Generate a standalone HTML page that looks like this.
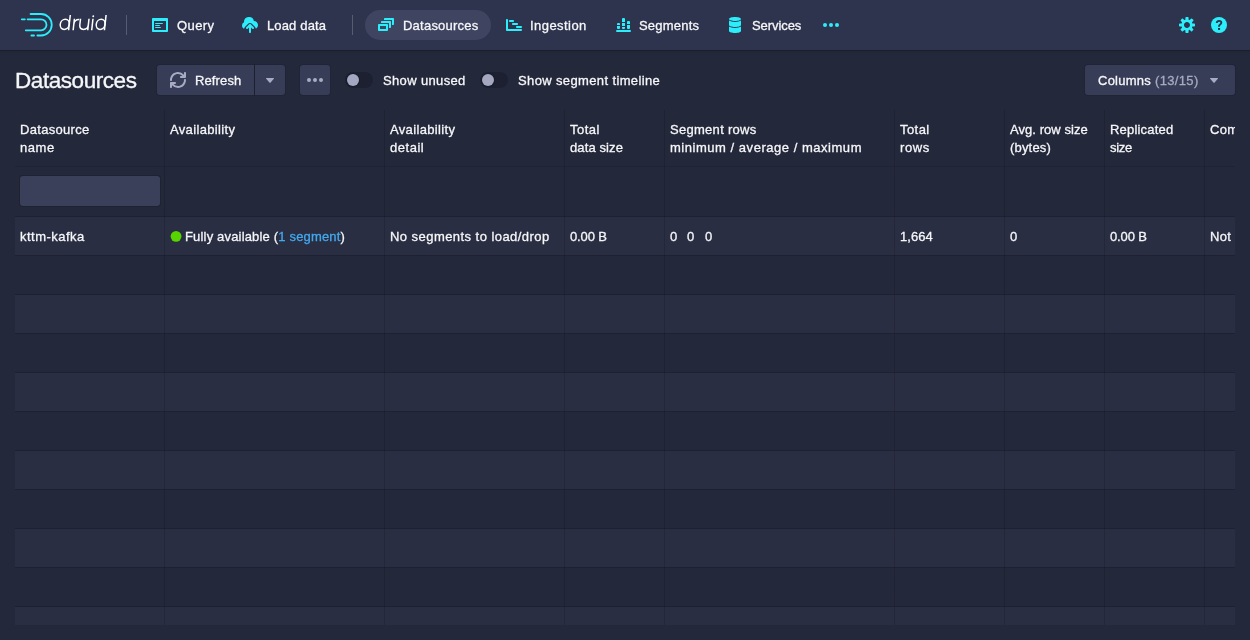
<!DOCTYPE html>
<html>
<head>
<meta charset="utf-8">
<title>Apache Druid</title>
<style>
*{box-sizing:border-box;margin:0;padding:0}
html,body{width:1250px;height:640px;overflow:hidden;background:#24283b}
body{font-family:"Liberation Sans",sans-serif;font-size:14px;line-height:18px;color:#f6f7f9;position:relative}
.t{position:absolute;white-space:nowrap;font-size:13px;line-height:18px;height:18px;transform-origin:0 50%;-webkit-text-stroke:0.3px currentColor;will-change:transform}
#nav{position:absolute;left:0;top:0;width:1250px;height:50px;background:#2f344e;box-shadow:0 1px 0 rgba(17,20,24,.27),0 2px 0 rgba(17,20,24,.1),0 3px 0 rgba(17,20,24,.04)}
.div{position:absolute;top:15px;width:1px;height:20px;background:rgba(255,255,255,.2)}
.pill{position:absolute;left:365px;top:10px;width:126px;height:30px;border-radius:15px;background:#3f4461}
svg{position:absolute;overflow:visible}
.ic{fill:#2ceefb}
.btn{position:absolute;top:65px;height:30px;background:#383d57;border-radius:3px;box-shadow:0 0 0 1px rgba(17,20,24,.18)}
.sw{position:absolute;top:72px;width:28px;height:16px;border-radius:8px;background:#1d2030}
.sw i{position:absolute;left:2px;top:2px;width:12px;height:12px;border-radius:6px;background:#a3a7c0;box-shadow:0 0 0 1px rgba(17,20,24,.3)}
#tbl{position:absolute;left:15px;top:110px;width:1220px;height:515px;overflow:hidden}
.vl{position:absolute;top:0;width:1px;height:515px;background:rgba(0,0,0,.14)}
.hl{position:absolute;left:0;width:1220px;height:1px;background:rgba(0,0,0,.16)}
.row{position:absolute;left:0;width:1220px;height:38px}
.odd{background:#292e42}
#filt{position:absolute;left:5px;top:66px;width:140px;height:30px;border-radius:3px;background:#3a3f5a;box-shadow:0 0 0 1px rgba(17,20,24,.28)}
a{color:#43a8ee;text-decoration:none}
</style>
</head>
<body>

<!-- ================= NAVBAR ================= -->
<div id="nav">
  <svg id="logo" style="left:0;top:0" width="120" height="50" viewBox="0 0 120 50">
    <g fill="none" stroke="#2ceefb" stroke-width="1.8" stroke-linecap="round">
      <path d="M30.6 14H41a10.75 10.75 0 0 1 0 21.5H37.4"/>
      <path d="M31.4 35.5h2.6"/>
      <path d="M27.600 19.300H41a5.500 5.500 0 0 1 0 11H25.800"/>
      <path d="M21.800 19.300h3"/>
    </g>
    <!-- wordmark "druid" -->
    <g fill="none" stroke="#ffffff" stroke-width="1.5" stroke-linecap="butt" stroke-linejoin="round" transform="translate(0,30.2) skewX(-6.3) translate(0,-30.2)">
      <!-- d -->
      <path d="M68.6 14.9V30.2"/><ellipse cx="64.1" cy="24.35" rx="4.5" ry="5.05"/>
      <!-- r -->
      <path d="M73.15 18.7V30.2M73.15 24.4c0-3.200 1.700-5 4.900-4.800"/>
      <!-- u -->
      <path d="M79.25 18.7v6.4c0 2.700 1.700 4.300 4.250 4.300s4.250-1.600 4.250-4.300v-6.400M87.750 24v6.200"/>
      <!-- i -->
      <path d="M91.7 18.7V30.2"/><circle cx="91.7" cy="16.2" r="0.95" fill="#fff" stroke="none"/>
      <!-- d -->
      <path d="M104.4 14.9V30.2"/><ellipse cx="100" cy="24.35" rx="4.4" ry="5.05"/>
    </g>
  </svg>
  <div class="div" style="left:126px"></div>
  <div class="div" style="left:352px"></div>
  <div class="pill"></div>

  <!-- Query: application icon -->
  <svg class="ic" style="left:152px;top:17px" width="16" height="16" viewBox="0 0 16 16"><path fill-rule="evenodd" d="M3.500 7h7c.28 0 .5-.22.5-.5s-.22-.5-.5-.5h-7c-.28 0-.5.22-.5.500s.22.500.500.500zM15 1H1c-.55 0-1 .45-1 1v12c0 .55.45 1 1 1h14c.55 0 1-.45 1-1V2c0-.55-.45-1-1-1zm-1 12H2V4h12v9zM3.500 9h4c.28 0 .5-.22.5-.5S7.780 8 7.500 8h-4c-.28 0-.5.22-.5.500s.22.500.500.500zm0 2h5c.28 0 .5-.22.5-.5s-.22-.5-.5-.5h-5c-.28 0-.5.22-.5.500s.22.500.500.500z"/></svg>
  <!-- cloud-upload icon -->
  <svg class="ic" style="left:242px;top:17px" width="16" height="16" viewBox="0 0 16 16"><path fill-rule="evenodd" d="M8.710 7.290C8.530 7.110 8.280 7 8 7s-.53.110-.71.290l-3 3a1.003 1.003 0 001.420 1.420L7 10.410V15c0 .55.450 1 1 1s1-.45 1-1v-4.590l1.290 1.290c.18.190.43.300.71.300a1.003 1.003 0 00.71-1.710l-3-3zM12 4c-.03 0-.07 0-.1.010A5 5 0 002 5c0 .11.010.22.020.33A3.510 3.510 0 000 8.500c0 1.410.84 2.610 2.030 3.170.2-.71.580-1.360 1.140-1.920L5.880 7.040C6.460 6.350 7.210 6 8 6s1.540.35 2.120 1.040l2.710 2.710c.54.54.93 1.200 1.130 1.900A3.990 3.990 0 0016 8c0-2.210-1.790-4-4-4z"/></svg>
  <!-- Datasources: multi-select -->
  <svg class="ic" style="left:378px;top:17px" width="16" height="16" viewBox="0 0 16 16"><path fill-rule="evenodd" d="M12 3.980H4c-.55 0-1 .45-1 1v1h8v5h1c.55 0 1-.45 1-1v-5c0-.55-.45-1-1-1zm3-3H7c-.55 0-1 .45-1 1v1h8v5h1c.55 0 1-.45 1-1v-5c0-.55-.45-1-1-1zm-6 6H1c-.55 0-1 .45-1 1v5c0 .55.45 1 1 1h8c.55 0 1-.45 1-1v-5c0-.55-.45-1-1-1zm-1 5H2v-3h6v3z"/></svg>
  <!-- Ingestion: gantt-chart -->
  <svg class="ic" style="left:506px;top:17px" width="16" height="16" viewBox="0 0 16 16"><path d="M4 5h3c.55 0 1-.45 1-1s-.45-1-1-1H4c-.55 0-1 .45-1 1s.45 1 1 1zM7 6c-.55 0-1 .45-1 1s.45 1 1 1h4c.55 0 1-.45 1-1s-.45-1-1-1H7zM11 9c-.55 0-1 .45-1 1s.45 1 1 1h4c.55 0 1-.45 1-1s-.45-1-1-1h-4zM15 12H2V3c0-.55-.45-1-1-1s-1 .45-1 1v10c0 .55.45 1 1 1h14c.55 0 1-.45 1-1s-.45-1-1-1z"/></svg>
  <!-- Segments: stacked-chart -->
  <svg class="ic" style="left:616px;top:17px" width="16" height="16" viewBox="0 0 16 16"><path d="M1 8V7a1 1 0 011-1h1a1 1 0 011 1V8zM1 9h3V11a1 1 0 01-1 1h-1a1 1 0 01-1-1zM6 5V2a1 1 0 011-1h1a1 1 0 011 1V5zM6 6h3V9h-3zM6 10h3V11a1 1 0 01-1 1h-1a1 1 0 01-1-1zM11 7V5a1 1 0 011-1h1a1 1 0 011 1V7zM11 8h3V11a1 1 0 01-1 1h-1a1 1 0 01-1-1zM1 13h13a1 1 0 010 2H1a1 1 0 010-2z"/></svg>
  <!-- Services: database -->
  <svg class="ic" style="left:727px;top:17px" width="16" height="16" viewBox="0 0 16 16"><path fill-rule="evenodd" d="M8 4c3.310 0 6-.9 6-2s-2.690-2-6-2C4.680 0 2 .9 2 2s2.680 2 6 2zm-6-.48V8c0 1.100 2.690 2 6 2s6-.9 6-2V3.520C12.780 4.400 10.560 5 8 5s-4.780-.6-6-1.480zm0 6V14c0 1.100 2.690 2 6 2s6-.9 6-2V9.520C12.780 10.400 10.560 11 8 11s-4.780-.6-6-1.480z"/></svg>
  <!-- more -->
  <svg class="ic" style="left:823px;top:17px" width="16" height="16" viewBox="0 0 16 16"><circle cx="2" cy="8" r="2"/><circle cx="8" cy="8" r="2"/><circle cx="14" cy="8" r="2"/></svg>
  <!-- cog -->
  <svg class="ic" style="left:1179px;top:17px" width="16" height="16" viewBox="0 0 16 16"><path fill-rule="evenodd" d="M15.190 6.390h-1.850c-.11-.37-.27-.71-.45-1.040l1.360-1.360c.31-.31.31-.82 0-1.130l-1.130-1.130a.803.803 0 00-1.130 0l-1.360 1.360c-.33-.17-.67-.33-1.040-.44V.790c0-.44-.36-.8-.8-.8h-1.600c-.44 0-.8.360-.8.800v1.860c-.39.120-.75.280-1.100.470l-1.300-1.300c-.3-.3-.79-.3-1.090 0L1.820 2.910c-.3.300-.3.790 0 1.090l1.300 1.300c-.2.340-.36.700-.48 1.090H.790c-.44 0-.8.360-.8.800v1.600c0 .44.360.800.800.800h1.850c.11.370.27.710.45 1.040l-1.360 1.360c-.31.310-.31.820 0 1.130l1.130 1.130c.31.310.82.310 1.130 0l1.360-1.360c.33.170.67.330 1.040.440v1.860c0 .44.360.800.800.800h1.600c.44 0 .8-.36.800-.8v-1.860c.39-.12.750-.28 1.100-.47l1.300 1.300c.3.300.79.300 1.090 0l1.090-1.090c.3-.3.3-.79 0-1.090l-1.300-1.300c.19-.35.360-.71.480-1.100h1.850c.44 0 .8-.36.800-.8v-1.600a.816.816 0 00-.81-.79zm-7.200 4.600c-1.660 0-3-1.340-3-3s1.340-3 3-3 3 1.340 3 3-1.340 3-3 3z"/></svg>
  <!-- help -->
  <svg style="left:1211px;top:17px" width="16" height="16" viewBox="0 0 16 16"><circle cx="8" cy="8" r="8" fill="#2ceefb"/><path d="M5.750 5.900c0-1.250 1-2.050 2.300-2.050 1.350 0 2.250.800 2.250 1.900 0 1.750-2.300 1.850-2.300 3.500v.500" fill="none" stroke="#2f344e" stroke-width="1.900"/><rect x="7" y="11" width="2.100" height="1.900" fill="#2f344e"/></svg>
</div>

<!-- ================= CONTROL BAR ================= -->

<div class="btn" style="left:157px;width:97px;border-radius:3px 0 0 3px"></div>
<div class="btn" style="left:255px;width:30px;border-radius:0 3px 3px 0"></div>
<div class="btn" style="left:300px;width:30px"></div>
<div class="btn" style="left:1085px;width:150px"></div>
<!-- refresh icon -->
<svg style="left:170px;top:72px" width="16" height="16" viewBox="0 0 16 16" fill="#a7abc3"><path fill-rule="evenodd" d="M14.990 6.990c-.55 0-1 .45-1 1 0 3.310-2.690 6-6 6-1.770 0-3.360-.78-4.460-2h1.460c.55 0 1-.45 1-1s-.45-1-1-1h-4c-.55 0-1 .45-1 1v4c0 .55.450 1 1 1s1-.45 1-1v-1.740a7.950 7.950 0 006 2.740c4.420 0 8-3.580 8-8 0-.55-.45-1-1-1zm0-7c-.55 0-1 .45-1 1v1.740a7.950 7.950 0 00-6-2.740c-4.420 0-8 3.580-8 8 0 .55.450 1 1 1s1-.45 1-1c0-3.310 2.690-6 6-6 1.770 0 3.360.78 4.460 2h-1.460c-.55 0-1 .45-1 1s.450 1 1 1h4c.55 0 1-.45 1-1v-4c0-.55-.45-1-1-1z"/></svg>
<!-- carets -->
<svg style="left:262px;top:72px" width="16" height="16" viewBox="0 0 16 16" fill="#a7abc3"><path d="M12 6.500c0-.28-.22-.5-.5-.5h-7a.495.495 0 00-.37.830l3.500 4c.9.100.22.170.37.170s.28-.7.370-.17l3.500-4c.08-.9.130-.2.130-.33z"/></svg>
<svg style="left:1206px;top:72px" width="16" height="16" viewBox="0 0 16 16" fill="#a7abc3"><path d="M12 6.500c0-.28-.22-.5-.5-.5h-7a.495.495 0 00-.37.830l3.500 4c.9.100.22.170.37.170s.28-.7.370-.17l3.500-4c.08-.9.130-.2.130-.33z"/></svg>
<!-- more button dots -->
<svg style="left:307px;top:72px" width="16" height="16" viewBox="0 0 16 16" fill="#a7abc3"><circle cx="2" cy="8" r="2"/><circle cx="8" cy="8" r="2"/><circle cx="14" cy="8" r="2"/></svg>
<div class="sw" style="left:345px"><i></i></div>
<div class="sw" style="left:480px"><i></i></div>

<!-- ================= TABLE ================= -->
<div id="tbl">
<div class="row odd" style="top:107px"></div>
<div class="hl" style="top:145px"></div>
<div class="row" style="top:146px"></div>
<div class="hl" style="top:184px"></div>
<div class="row odd" style="top:185px"></div>
<div class="hl" style="top:223px"></div>
<div class="row" style="top:224px"></div>
<div class="hl" style="top:262px"></div>
<div class="row odd" style="top:263px"></div>
<div class="hl" style="top:301px"></div>
<div class="row" style="top:302px"></div>
<div class="hl" style="top:340px"></div>
<div class="row odd" style="top:341px"></div>
<div class="hl" style="top:379px"></div>
<div class="row" style="top:380px"></div>
<div class="hl" style="top:418px"></div>
<div class="row odd" style="top:419px"></div>
<div class="hl" style="top:457px"></div>
<div class="row" style="top:458px"></div>
<div class="hl" style="top:496px"></div>
<div class="row odd" style="top:497px"></div>
<div class="hl" style="top:535px"></div>
<div class="hl" style="top:56px;background:rgba(0,0,0,.1)"></div>
<div class="hl" style="top:106px"></div>
<div class="vl" style="left:149px"></div>
<div class="vl" style="left:369px"></div>
<div class="vl" style="left:549px"></div>
<div class="vl" style="left:649px"></div>
<div class="vl" style="left:879px"></div>
<div class="vl" style="left:989px"></div>
<div class="vl" style="left:1089px"></div>
<div class="vl" style="left:1189px"></div>
<div id="filt"></div>
<div class="t" id="h9a" style="left:1194.50px;top:11px;letter-spacing:0.300px;">Compaction</div>
<div class="t" id="r9" style="left:1194.50px;top:118px;letter-spacing:0.300px;">Not enabled</div>
</div>
<svg style="left:0;top:0" width="1250" height="640"><circle cx="176.05" cy="236.35" r="5.4" fill="#57d500"/></svg>

<!-- texts -->
<div class="t" id="title" style="left:15.08px;top:66px;letter-spacing:-0.437px;font-size:22.5px;height:30px;line-height:30px;-webkit-text-stroke:0.35px currentColor;">Datasources</div>
<div class="t" id="n1" style="left:176.51px;top:17px;letter-spacing:0.410px;">Query</div>
<div class="t" id="n2" style="left:266.61px;top:17px;letter-spacing:0.144px;">Load data</div>
<div class="t" id="n3" style="left:402.96px;top:17px;letter-spacing:0.232px;">Datasources</div>
<div class="t" id="n4" style="left:530.44px;top:17px;letter-spacing:0.440px;">Ingestion</div>
<div class="t" id="n5" style="left:639.17px;top:17px;letter-spacing:0.202px;">Segments</div>
<div class="t" id="n6" style="left:751.86px;top:17px;letter-spacing:-0.082px;">Services</div>
<div class="t" id="c1" style="left:194.79px;top:72px;letter-spacing:0.125px;">Refresh</div>
<div class="t" id="c2" style="left:382.93px;top:72px;letter-spacing:0.355px;">Show unused</div>
<div class="t" id="c3" style="left:517.95px;top:72px;letter-spacing:0.370px;">Show segment timeline</div>
<div class="t" id="c4" style="left:1097.85px;top:72px;letter-spacing:0.247px;">Columns</div>
<div class="t" id="c5" style="left:1154.89px;top:72px;letter-spacing:0.341px;color:#a7abc3;">(13/15)</div>
<div class="t" id="h1a" style="left:19.75px;top:121px;letter-spacing:0.306px;">Datasource</div>
<div class="t" id="h1b" style="left:20.35px;top:139px;letter-spacing:0.549px;">name</div>
<div class="t" id="h2a" style="left:170.00px;top:121px;letter-spacing:0.337px;">Availability</div>
<div class="t" id="h3a" style="left:390.00px;top:121px;letter-spacing:0.337px;">Availability</div>
<div class="t" id="h3b" style="left:390.02px;top:139px;letter-spacing:0.521px;">detail</div>
<div class="t" id="h4a" style="left:570.24px;top:121px;letter-spacing:0.455px;">Total</div>
<div class="t" id="h4b" style="left:570.02px;top:139px;letter-spacing:0.109px;">data size</div>
<div class="t" id="h5a" style="left:670.11px;top:121px;letter-spacing:0.287px;">Segment rows</div>
<div class="t" id="h5b" style="left:670.21px;top:139px;letter-spacing:0.529px;">minimum / average / maximum</div>
<div class="t" id="h6a" style="left:900.31px;top:121px;letter-spacing:0.445px;">Total</div>
<div class="t" id="h6b" style="left:900.17px;top:139px;letter-spacing:0.580px;">rows</div>
<div class="t" id="h7a" style="left:1010.24px;top:121px;letter-spacing:0.054px;">Avg. row size</div>
<div class="t" id="h7b" style="left:1010.45px;top:139px;letter-spacing:0.178px;">(bytes)</div>
<div class="t" id="h8a" style="left:1109.75px;top:121px;letter-spacing:0.199px;">Replicated</div>
<div class="t" id="h8b" style="left:1110.04px;top:139px;letter-spacing:-0.307px;">size</div>
<div class="t" id="r1" style="left:20.10px;top:228px;letter-spacing:0.468px;">kttm-kafka</div>
<div class="t" id="r2" style="left:185.02px;top:228px;letter-spacing:0.173px;">Fully available (<a>1 segment</a>)</div>
<div class="t" id="r3" style="left:390.02px;top:228px;letter-spacing:0.449px;">No segments to load/drop</div>
<div class="t" id="r4" style="left:570.05px;top:228px;letter-spacing:-0.129px;">0.00 B</div>
<div class="t" id="r5a" style="left:669.80px;top:228px;letter-spacing:0.000px;">0</div>
<div class="t" id="r5b" style="left:687.00px;top:228px;letter-spacing:0.000px;">0</div>
<div class="t" id="r5c" style="left:704.80px;top:228px;letter-spacing:0.000px;">0</div>
<div class="t" id="r6" style="left:899.72px;top:228px;letter-spacing:0.039px;">1,664</div>
<div class="t" id="r7" style="left:1010.40px;top:228px;letter-spacing:0.000px;">0</div>
<div class="t" id="r8" style="left:1110.05px;top:228px;letter-spacing:-0.129px;">0.00 B</div>

</body>
</html>
